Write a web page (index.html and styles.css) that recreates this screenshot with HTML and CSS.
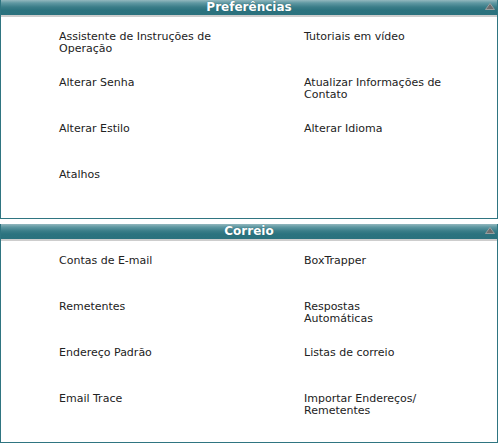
FILE: index.html
```html
<!DOCTYPE html>
<html lang="pt">
<head>
<meta charset="utf-8">
<title>Preferências</title>
<link rel="stylesheet" href="styles.css">
</head>
<body>
<section class="panel">
  <header class="panel-head">
    <span class="spacer"></span>
    <h2 class="panel-title">Preferências</h2>
    <span class="toggle"><svg width="10" height="7" viewBox="0 0 10 7"><polygon points="5,0.5 9.5,6.5 0.5,6.5" fill="#6e6e6e" stroke="#a9a9a9" stroke-width="0.8"/></svg></span>
  </header>
  <div class="panel-body">
    <a class="item">Assistente de Instruções de Operação</a>
    <a class="item">Tutoriais em vídeo</a>
    <a class="item">Alterar Senha</a>
    <a class="item">Atualizar Informações de Contato</a>
    <a class="item">Alterar Estilo</a>
    <a class="item">Alterar Idioma</a>
    <a class="item">Atalhos</a>
    <span class="item"></span>
  </div>
</section>
<section class="panel">
  <header class="panel-head">
    <span class="spacer"></span>
    <h2 class="panel-title">Correio</h2>
    <span class="toggle"><svg width="10" height="7" viewBox="0 0 10 7"><polygon points="5,0.5 9.5,6.5 0.5,6.5" fill="#6e6e6e" stroke="#a9a9a9" stroke-width="0.8"/></svg></span>
  </header>
  <div class="panel-body">
    <a class="item">Contas de E-mail</a>
    <a class="item">BoxTrapper</a>
    <a class="item">Remetentes</a>
    <a class="item">Respostas<br>Automáticas</a>
    <a class="item">Endereço Padrão</a>
    <a class="item">Listas de correio</a>
    <a class="item">Email Trace</a>
    <a class="item">Importar Endereços/<br>Remetentes</a>
  </div>
</section>
</body>
</html>
```
FILE: styles.css
```css
html, body {
  margin: 0;
  padding: 0;
  background: #ffffff;
}
body {
  font-family: "DejaVu Sans", Verdana, sans-serif;
  font-size: 11px;
  color: #222222;
  width: 498px;
}
.panel {
  border: 1px solid #2f7581;
  border-top: none;
  height: 218px;
  margin-bottom: 5px;
  display: flex;
  flex-direction: column;
}
.panel-head {
  height: 15px;
  border-bottom: 2px solid #cdcdcd;
  background: linear-gradient(to bottom, #93b8be 0px, #5f98a2 3px, #3a7d88 7px, #2c737f 10px, #2a717d 15px);
  display: grid;
  grid-template-columns: 20px 1fr 20px;
  align-items: center;
}
.panel-title {
  margin: 0;
  text-align: center;
  font-size: 12px;
  font-weight: bold;
  color: #ffffff;
  line-height: 15px;
  text-shadow: 0 0 1px #1f5660;
}
.toggle {
  display: flex;
  justify-content: flex-end;
  padding-right: 2px;
  height: 15px;
  align-items: flex-start;
  padding-top: 3px;
  box-sizing: border-box;
}
.toggle svg {
  display: block;
}
.panel-body {
  flex: 1;
  padding: 14px 0 0 58px;
  display: grid;
  grid-template-columns: 245px 1fr;
  grid-auto-rows: 46px;
  align-content: start;
}
.item {
  display: block;
  max-width: 170px;
  line-height: 12px;
  color: #222222;
  text-decoration: none;
}
```
